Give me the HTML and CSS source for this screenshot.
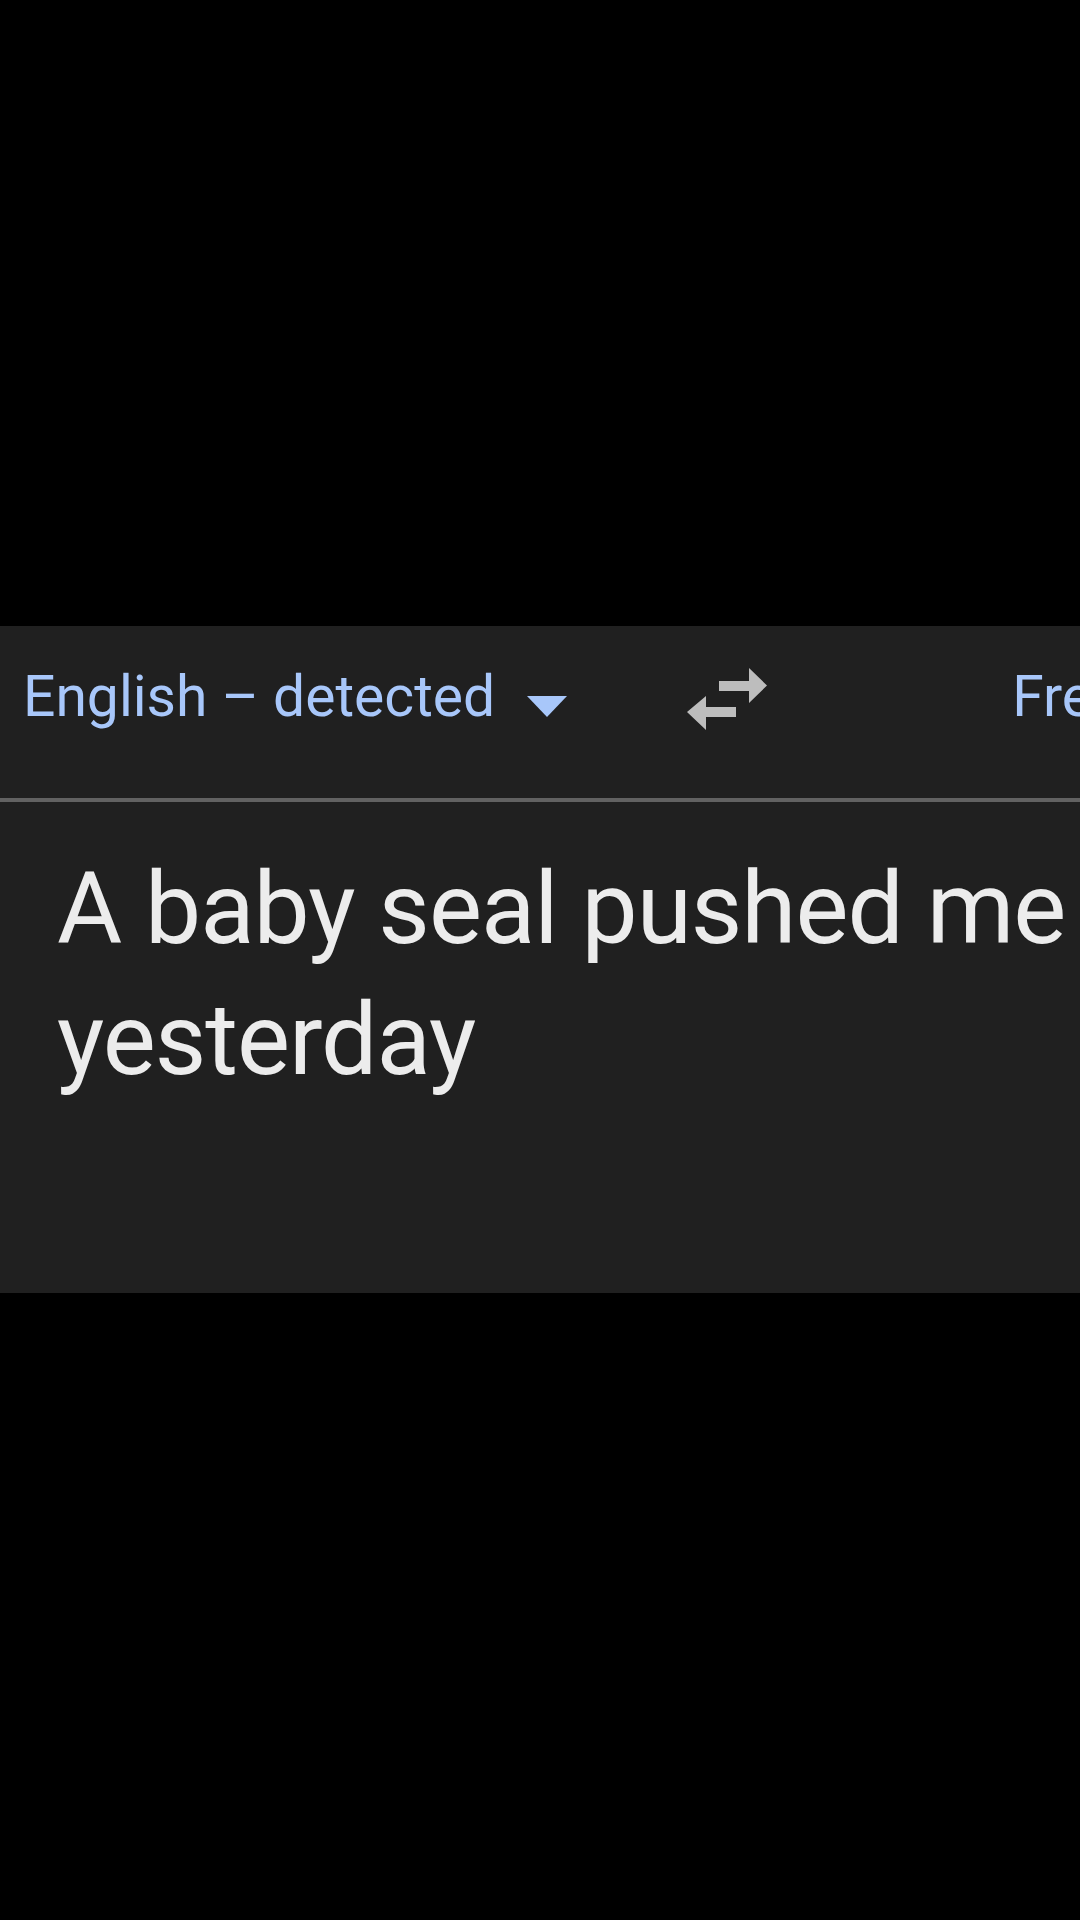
FILE: index.html
```html
<!DOCTYPE html>
<html lang="en">
<head>
    <meta charset="UTF-8">
    <meta name="viewport" content="width=device-width, initial-scale=1.0">
    <title>Translate</title>
    <link rel="stylesheet" href="styles.css">
</head>
<body>
    <div class="translator">
        <div class="lang-bar">
            <div class="lang-source">
                <span class="lang-name">English – detected</span>
                <svg class="caret" width="40" height="21" viewBox="0 0 40 21">
                    <polygon points="0,0 40,0 20,21" fill="#a8c7fa"/>
                </svg>
            </div>
            <svg class="swap" width="80" height="62" viewBox="0 0 80 62">
                <polygon points="32,13 62,13 62,0 80,17.5 62,35 62,23 32,23" fill="#bdbdbd"/>
                <polygon points="49,39 19,39 19,28 0,44 19,62 19,49 49,49" fill="#bdbdbd"/>
            </svg>
            <span class="lang-name lang-target">French</span>
        </div>
        <div class="divider"></div>
        <div class="source-text">A baby seal pushed me yesterday</div>
    </div>
</body>
</html>
```

FILE: styles.css
```css
body {
    margin: 0;
    background-color: #000;
    font-family: Roboto, "Noto Sans", sans-serif;
    width: 1080px;
    height: 1920px;
    overflow: hidden;
}
.translator {
    margin-top: 626px;
    height: 667px;
    background-color: #202020;
    overflow: hidden;
}
.lang-bar {
    display: flex;
    align-items: flex-start;
    height: 172px;
    padding-top: 37px;
    padding-left: 23px;
    box-sizing: border-box;
    white-space: nowrap;
    overflow: hidden;
}
.lang-source {
    display: flex;
    align-items: flex-start;
}
.lang-name {
    font-size: 57px;
    line-height: 68px;
    color: #a8c7fa;
}
.caret {
    margin-top: 33px;
    margin-left: 32px;
    flex-shrink: 0;
}
.swap {
    margin-top: 5px;
    margin-left: 120px;
    flex-shrink: 0;
}
.lang-target {
    margin-left: 245px;
}
.divider {
    height: 4px;
    background-color: #626262;
}
.source-text {
    padding: 41px 0 0 57px;
    font-size: 100px;
    line-height: 131px;
    letter-spacing: -1px;
    color: #ececec;
}
```
